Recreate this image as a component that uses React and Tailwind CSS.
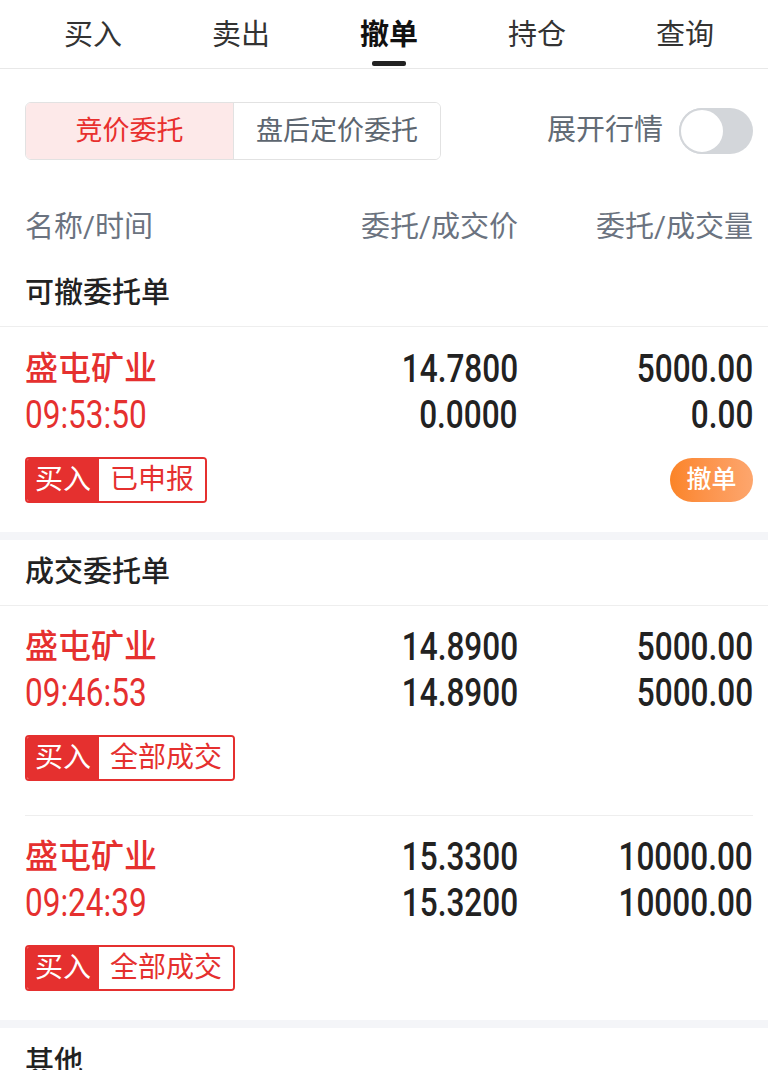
import React from "react";

const FONT = { fontFamily: "Roboto, 'Noto Sans CJK SC', 'Noto Sans', sans-serif" };

function Tabs() {
  const tabs = ["买入", "卖出", "撤单", "持仓", "查询"];
  return (
    <div className="flex h-[69px] border-b border-[#e8e8e8] pl-[19px] pr-[9px]">
      {tabs.map((t, i) => (
        <div key={t} className="relative flex flex-1 justify-center">
          <span
            className={
              "mt-[14px] h-[42px] text-[29px] leading-[42px] " +
              (i === 2 ? "font-bold text-[#111]" : "text-[#333]")
            }
          >
            {t}
          </span>
          {i === 2 && (
            <div className="absolute bottom-[2px] left-1/2 h-[5px] w-[34px] -translate-x-1/2 rounded-[2px] bg-[#222]" />
          )}
        </div>
      ))}
    </div>
  );
}

function Segment() {
  return (
    <div className="mt-[33px] flex h-[58px] items-center justify-between pl-[25px] pr-[15px]">
      <div className="flex h-[58px] overflow-hidden rounded-[6px] border border-[#e2e2e2]">
        <div className="flex w-[207px] items-center justify-center bg-[#fde9e9] text-[27px] text-[#e8302e]">
          竞价委托
        </div>
        <div className="flex w-[207px] items-center justify-center border-l border-[#e2e2e2] bg-white text-[27px] text-[#5d6670]">
          盘后定价委托
        </div>
      </div>
      <div className="flex items-center">
        <span className="text-[29px] text-[#626b75]">展开行情</span>
        <div className="ml-[16px] flex h-[46px] w-[74px] items-center rounded-full bg-[#d3d6da]">
          <div className="h-[46px] w-[46px] rounded-full border-2 border-[#d3d6da] bg-white" />
        </div>
      </div>
    </div>
  );
}

function HeaderRow() {
  return (
    <div className="mt-[45px] grid h-[46px] grid-cols-[1fr_200px_235px] items-center pl-[25px] pr-[15px] text-[29px] text-[#6b7380]">
      <span>名称/时间</span>
      <span className="text-right">委托/成交价</span>
      <span className="text-right">委托/成交量</span>
    </div>
  );
}

function SectionTitle({ children, mt }) {
  return (
    <div className={"border-b border-[#eeeeee] pl-[25px] " + mt}>
      <div className="flex h-[46px] items-center text-[29px] font-medium text-[#222]">{children}</div>
      <div className="h-[9px]" />
    </div>
  );
}

function Badge({ status }) {
  return (
    <div className="flex h-[46px] overflow-hidden rounded-[4px] border-2 border-[#e5302f] text-[28px] leading-none">
      <div className="flex w-[72px] items-center justify-center bg-[#e5302f] text-white">买入</div>
      <div className="flex items-center bg-white px-[11px] text-[#e5302f]">{status}</div>
    </div>
  );
}

function Num({ children, right, cls }) {
  return (
    <div className={"h-[46px] overflow-visible " + (right ? "text-right" : "")}>
      <span
        className={
          "inline-block h-[46px] scale-x-[0.83] align-top text-[38px] leading-[46px] " +
          (right ? "origin-right " : "origin-left ") +
          cls
        }
      >
        {children}
      </span>
    </div>
  );
}

function OrderRow({ time, p1, p2, v1, v2, status, cancel, pad, divider }) {
  return (
    <div className={pad + (divider ? " mx-[25px] mr-[15px] border-b border-[#eeeeee]" : " pl-[25px] pr-[15px]")}>
      <div className="grid grid-cols-[1fr_200px_235px] leading-[46px]">
        <div className="h-[46px] text-[33px] font-medium text-[#e5302f]">盛屯矿业</div>
        <Num right cls="font-medium text-[#222]">{p1}</Num>
        <Num right cls="font-medium text-[#222]">{v1}</Num>
        <Num cls="text-[#e5302f]">{time}</Num>
        <Num right cls="font-medium text-[#222]">{p2}</Num>
        <Num right cls="font-medium text-[#222]">{v2}</Num>
      </div>
      <div className="mt-[19px] flex items-center justify-between">
        <Badge status={status} />
        {cancel && (
          <div className="flex h-[44px] w-[83px] items-center justify-center rounded-full bg-gradient-to-r from-[#fb8426] to-[#fda66d] text-[25px] font-medium text-white">
            撤单
          </div>
        )}
      </div>
    </div>
  );
}

export default function App() {
  return (
    <div className="h-[1070px] w-[768px] overflow-hidden bg-white" style={FONT}>
      <Tabs />
      <Segment />
      <HeaderRow />
      <SectionTitle mt="mt-[20px]">可撤委托单</SectionTitle>
      <OrderRow
        time="09:53:50"
        p1="14.7800"
        p2="0.0000"
        v1="5000.00"
        v2="0.00"
        status="已申报"
        cancel
        pad="pt-[19px] pb-[29px]"
      />
      <div className="h-[8px] bg-[#f4f5f8]" />
      <SectionTitle mt="mt-[10px]">成交委托单</SectionTitle>
      <OrderRow
        time="09:46:53"
        p1="14.8900"
        p2="14.8900"
        v1="5000.00"
        v2="5000.00"
        status="全部成交"
        pad="pt-[18px] pb-[34px]"
        divider
      />
      <OrderRow
        time="09:24:39"
        p1="15.3300"
        p2="15.3200"
        v1="10000.00"
        v2="10000.00"
        status="全部成交"
        pad="pt-[18px] pb-[29px]"
      />
      <div className="h-[8px] bg-[#f4f5f8]" />
      <div className="pl-[25px] pt-[12px]">
        <div className="flex h-[46px] items-center text-[29px] font-medium text-[#222]">其他</div>
      </div>
    </div>
  );
}
